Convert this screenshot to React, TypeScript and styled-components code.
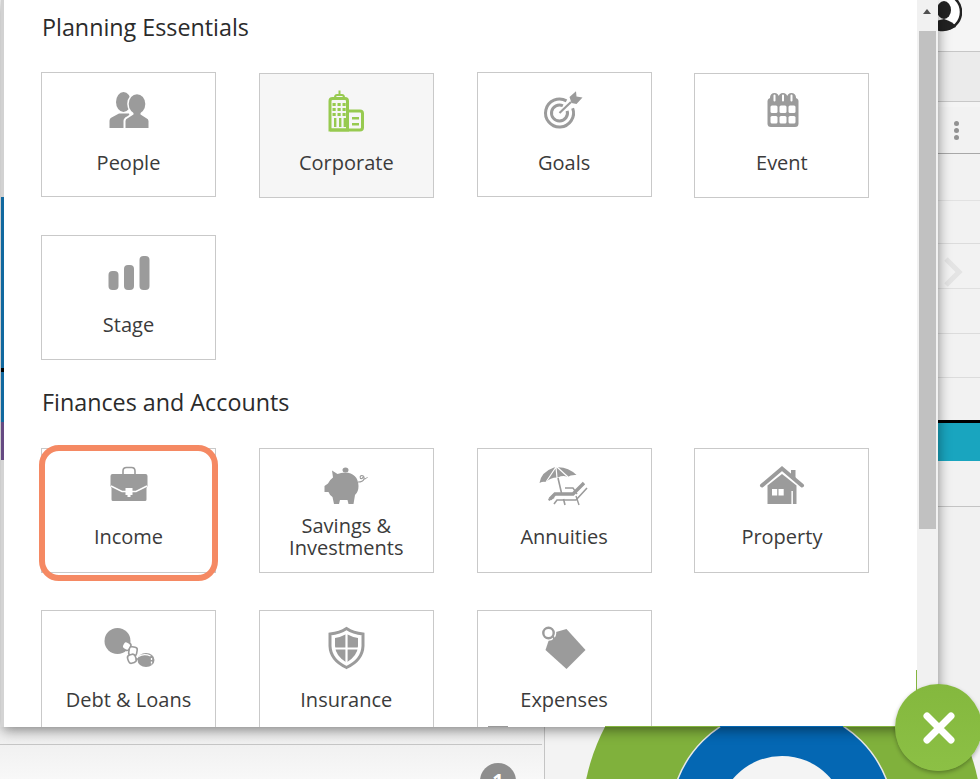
import React from 'react';
import styled, { createGlobalStyle } from 'styled-components';

const Global = createGlobalStyle`
  html, body {
    margin: 0;
    padding: 0;
    background: #f4f4f4;
    font-family: "Open Sans", "Liberation Sans", sans-serif;
  }
`;

const Page = styled.div`
  position: relative;
  width: 980px;
  height: 779px;
  overflow: hidden;
  display: grid;
  grid-template-rows: 727px 52px;
  background: #f3f3f3;
`;

const TopRow = styled.div`
  display: flex;
  min-height: 0;
`;

const LeftStrip = styled.div`
  position: relative;
  z-index: 3;
  width: 3px;
  margin: 0 -1px 0 1px;
  flex: none;
  display: flex;
  flex-direction: column;
`;

const StripPart = styled.div<{ $h?: number; $c: string }>`
  height: ${p => (p.$h ? `${p.$h}px` : 'auto')};
  flex: ${p => (p.$h ? 'none' : '1')};
  background: ${p => p.$c};
`;

const Dialog = styled.div`
  position: relative;
  z-index: 2;
  flex: none;
  display: flex;
  width: 935px;
  height: 727px;
  box-shadow: 0 3px 12px rgba(0, 0, 0, 0.45);
`;

const Modal = styled.div`
  position: relative;
  width: 914px;
  height: 727px;
  overflow: hidden;
  background: #fff;
  padding: 12.4px 0 0 38px;
  box-sizing: border-box;
`;

const Heading = styled.h2<{ $second?: boolean }>`
  margin: ${p => (p.$second ? '27px 0 30.8px 1px' : '0 0 30px 1px')};
  font-size: 23.3px;
  line-height: 30px;
  font-weight: 500;
  color: #2b2b2b;
`;

const Grid = styled.div`
  display: grid;
  grid-template-columns: repeat(4, 175px);
  grid-auto-rows: 125px;
  column-gap: 42.8px;
  row-gap: 37.6px;
`;

const Card = styled.div<{ $active?: boolean; $drop?: boolean }>`
  position: relative;
  box-sizing: border-box;
  display: flex;
  flex-direction: column;
  align-items: center;
  margin-top: ${p => (p.$drop ? '1px' : '0')};
  margin-bottom: ${p => (p.$drop ? '-1px' : '0')};
  padding-top: 15px;
  border: 1px solid #c9c9c9;
  background: ${p => (p.$active ? '#f6f6f6' : '#fff')};
`;

const IconBox = styled.svg`
  display: block;
  flex: none;
  width: 64px;
  height: 44px;
  margin-bottom: 7px;
`;

const Label = styled.div<{ $shift?: number }>`
  display: flex;
  flex: none;
  align-items: center;
  justify-content: center;
  box-sizing: border-box;
  height: 44px;
  width: 100%;
  margin-top: ${p => p.$shift || 0}px;
  padding: 0 12px;
  text-align: center;
  font-size: 20px;
  line-height: 22px;
  color: #3b3b3b;
`;

const Ring = styled.div`
  position: absolute;
  top: -4px;
  left: -3px;
  right: -3px;
  bottom: -9px;
  border: 6px solid #f58963;
  border-radius: 20px;
  pointer-events: none;
`;

const EdgeLine = styled.div`
  position: absolute;
  top: 670px;
  right: 0;
  width: 1px;
  height: 57px;
  background: #84b53f;
`;

// 1px of the chart behind shows under the panel's bottom edge
const BottomHem = styled.div`
  position: absolute;
  bottom: 0;
  left: 602px;
  width: 312px;
  height: 1px;
  background: linear-gradient(
    to right,
    #84b53f 0,
    #84b53f 115px,
    #0467b3 115px,
    #0467b3 238px,
    #84b53f 238px,
    #84b53f 100%
  );
`;

const PeekTab = styled.div`
  position: absolute;
  bottom: 0;
  left: 485px;
  width: 20px;
  height: 1px;
  background: #999;
`;

const ScrollTrack = styled.div`
  position: relative;
  width: 21px;
  height: 727px;
  background: #f1f1f1;
`;

const ScrollArrow = styled.div`
  position: absolute;
  top: 9px;
  left: 6px;
  border-left: 4.5px solid transparent;
  border-right: 4.5px solid transparent;
  border-bottom: 5px solid #505050;
`;

const ScrollThumb = styled.div`
  position: absolute;
  top: 31px;
  left: 2px;
  width: 17px;
  height: 498px;
  background: #c1c1c1;
`;

const RightRail = styled.div`
  flex: 1;
  display: flex;
  flex-direction: column;
  min-width: 0;
`;

const RailRow = styled.div<{ $h: number; $line?: string; $bg?: string }>`
  position: relative;
  box-sizing: border-box;
  height: ${p => p.$h}px;
  flex: none;
  background: ${p => p.$bg || '#f2f2f2'};
  border-bottom: ${p => (p.$line ? `1px solid ${p.$line}` : 'none')};
  display: flex;
  align-items: center;
  overflow: hidden;
`;

const Avatar = styled.svg`
  position: absolute;
  top: 0;
  left: 0;
  width: 24px;
  height: 32px;
`;

const Dots = styled.div`
  display: flex;
  flex-direction: column;
  gap: 2px;
  margin-left: 16px;
  span {
    width: 5px;
    height: 5px;
    border-radius: 50%;
    background: #929292;
  }
`;

const Chevron = styled.svg`
  position: absolute;
  top: 12px;
  left: 5px;
  width: 20px;
  height: 32px;
`;

const BottomRow = styled.div`
  display: flex;
  min-height: 0;
  overflow: hidden;
`;

const BottomLeft = styled.div`
  position: relative;
  width: 545px;
  flex: none;
  box-sizing: border-box;
  padding-top: 17px;
  border-right: 1px solid #c4c4c4;
  background: linear-gradient(#ededed, #f8f8f8);
`;

const BottomRule = styled.div`
  width: 542px;
  height: 1px;
  background: #c6c6c6;
`;

const CountBadge = styled.div`
  position: absolute;
  top: 36px;
  left: 480px;
  width: 36px;
  height: 36px;
  border-radius: 50%;
  background: #8e8e8e;
  color: #fff;
  font-size: 20px;
  font-weight: 700;
  line-height: 36px;
  text-align: center;
`;

const Chart = styled.svg`
  display: block;
  flex: 1;
  height: 52px;
  min-width: 0;
`;

const CloseButton = styled.button`
  position: absolute;
  z-index: 3;
  top: 684px;
  left: 895px;
  width: 87px;
  height: 87px;
  padding: 0;
  border: 0;
  border-radius: 50%;
  background: linear-gradient(#84b83e, #8cc045);
  box-shadow: 0 2px 4px rgba(0, 0, 0, 0.3);
  display: flex;
  align-items: center;
  justify-content: center;
`;

const G = '#9b9b9b';

const PeopleIcon = () => (
  <IconBox viewBox="0 0 64 44">
    <ellipse cx="26.5" cy="14" rx="7.5" ry="10" fill={G} />
    <path d="M12.5 40V33Q12.5 30 15.5 29L22 25.5H32L36 40Z" fill={G} />
    <ellipse cx="40" cy="16" rx="9.8" ry="11.3" fill="#fff" />
    <path d="M26.5 40V33Q26.5 30 30 28.5L35 25H45L50 28.5Q53 30 53 33V40Z" fill="#fff" />
    <ellipse cx="40" cy="16" rx="8.3" ry="9.8" fill={G} />
    <path d="M28.5 40V33Q28.5 31 31 30L36.5 26.5V23H43.5V26.5L49 30Q51.5 31 51.5 33V40Z" fill={G} />
  </IconBox>
);

const CorporateIcon = () => {
  const c = '#97ca50';
  return (
    <IconBox viewBox="0 0 64 44">
      <path d="M25.5 1.5V6M21 8.5Q21 6 23 6H28Q30 6 30 8.5" stroke={c} strokeWidth="2" fill="none" />
      <path d="M16 41V12Q16 9.5 18.5 9.5H31Q33.5 9.5 33.5 12V41Z" stroke={c} strokeWidth="3" fill="none" />
      <path d="M33.5 22H46Q48.5 22 48.5 24.5V38.5Q48.5 41 46 41H16" stroke={c} strokeWidth="3" fill="none" />
      {[14, 19, 24].flatMap(y =>
        [20, 25, 30].map(x => <rect key={`${x}-${y}`} x={x - 1.5} y={y} width="3.2" height="3" fill={c} />)
      )}
      <path d="M20 29h2.4v9H20zM25 29h2.4v9H25zM29.6 29H32v9h-2.4zM38 28h7v2.6h-7zM38 34h7v2.6h-7z" fill={c} />
    </IconBox>
  );
};

const GoalsIcon = () => (
  <IconBox viewBox="0 0 64 44">
    <path d="M40.66 20.2A14 14 0 1 1 34.5 12.9" stroke={G} strokeWidth="3" fill="none" />
    <path d="M35.2 22.9A8 8 0 1 1 30.9 17.75" stroke={G} strokeWidth="3" fill="none" />
    <path d="M27.5 25L39 14" stroke={G} strokeWidth="2.2" />
    <path d="M37.5 9L44 3.2L44.5 8.5L50.5 9.5L44.5 16L39.5 15Z" fill={G} />
  </IconBox>
);

const EventIcon = () => (
  <IconBox viewBox="0 0 64 44">
    <rect x="17.5" y="9" width="31" height="29" rx="3.5" fill={G} />
    <path d="M20 11V8.5a4.5 4.5 0 0 1 9 0V11ZM28.5 11V8.5a4.5 4.5 0 0 1 9 0V11ZM37 11V8.5a4.5 4.5 0 0 1 9 0V11Z" fill={G} />
    <path d="M24.5 6.5v5M33 6.5v5M41.5 6.5v5" stroke="#fff" strokeWidth="2" strokeLinecap="round" />
    {[16.5, 27].flatMap(y =>
      [20.5, 29.5, 38.5].map(x => <rect key={`${x}-${y}`} x={x} y={y} width="7" height="7.5" rx="1.5" fill="#fff" />)
    )}
  </IconBox>
);

const StageIcon = () => (
  <IconBox viewBox="0 0 64 44">
    <rect x="11.5" y="20" width="10" height="19" rx="4" fill={G} />
    <rect x="27" y="14" width="10" height="25" rx="4" fill={G} />
    <rect x="42.5" y="5" width="10" height="34" rx="4" fill={G} />
  </IconBox>
);

const IncomeIcon = () => (
  <IconBox viewBox="0 0 64 44">
    <path d="M26 10V7Q26 3.5 29.5 3.5H34.5Q38 3.5 38 7V10" stroke={G} strokeWidth="1.6" fill="none" />
    <path d="M13.5 12Q13.5 10 15.5 10H48.5Q50.5 10 50.5 12V22L49.5 24V35.5Q49.5 37 48 37H16Q14.5 37 14.5 35.5V24L13.5 22Z" fill={G} />
    <path d="M14 22L25 27.5H39L50 22" stroke="#fff" strokeWidth="1.4" fill="none" />
    <rect x="28.5" y="24" width="7" height="7" fill="#fff" />
    <rect x="30.5" y="31" width="3" height="2" fill="#fff" />
  </IconBox>
);

const SavingsIcon = () => (
  <IconBox viewBox="0 0 64 44">
    <ellipse cx="31.5" cy="6" rx="3" ry="2.5" fill={G} />
    <path d="M18 6.5L23.5 10Q27 8.5 31 8.5Q44 9 44.5 22Q44.5 28 41 31L39.5 40H34.5L33.5 36H26L25 40H20L18.5 33Q15.5 31 14.5 28H10.5V22L14 19.5Q15.5 16 19 13.5Z" fill={G} />
    <path d="M44 18Q49 18 50 15Q50.5 11.5 47.5 11.5Q45.5 12 46.5 14.5Q48.5 15 49 13" stroke={G} strokeWidth="1.1" fill="none" />
    <path d="M50 15Q52.5 15 53.5 13" stroke={G} strokeWidth="1" fill="none" />
  </IconBox>
);

const AnnuitiesIcon = () => (
  <IconBox viewBox="0 0 64 44">
    <path d="M7.5 19Q9 8 22 3.5Q35 1.5 44.5 11Q39 10.5 35.5 13Q31 11 26 13.5Q19 13 14 18Q11 17 7.5 19Z" fill={G} />
    <path d="M24 3L14 18M24 3L25 14M25 3L36 13" stroke="#fff" strokeWidth="1.2" />
    <path d="M26 14L29.5 29M31.5 35L33 41" stroke={G} strokeWidth="1.6" />
    <path d="M18 35L23 30H41L52 19" stroke={G} strokeWidth="3.4" fill="none" />
    <path d="M22 40L25 36H44L55 24" stroke={G} strokeWidth="1.6" fill="none" />
    <path d="M33 24H41L45 30M48 24L44 27M44 32L47 41" stroke={G} strokeWidth="1.4" fill="none" />
    <path d="M16.5 36L22 33" stroke={G} strokeWidth="2.4" />
  </IconBox>
);

const PropertyIcon = () => (
  <IconBox viewBox="0 0 64 44">
    <rect x="41" y="6" width="4.5" height="9" fill={G} />
    <path d="M12 21.5L32 4.5L52 21.5" stroke={G} strokeWidth="4" strokeLinecap="round" fill="none" />
    <path d="M17.5 21.5L32 10L46.5 21.5V40H17.5Z" fill={G} />
    <rect x="22" y="25" width="5.2" height="6.5" fill="#fff" />
    <rect x="28.5" y="25" width="5.2" height="6.5" fill="#fff" />
    <rect x="41.4" y="27" width="1.5" height="13" fill="#fff" />
  </IconBox>
);

const DebtIcon = () => (
  <IconBox viewBox="0 0 64 44">
    <circle cx="20.5" cy="15" r="13" fill={G} />
    <ellipse cx="49" cy="34" rx="8.5" ry="7" fill={G} />
    <path d="M41.5 30.5Q47 27 53.5 30" stroke="#fff" strokeWidth="1.3" fill="none" />
    <path d="M54.5 32V39" stroke="#fff" strokeWidth="1.3" strokeDasharray="2 1.4" />
    <rect x="25.5" y="16" width="8" height="8" rx="3" transform="rotate(30 29.5 20)" fill="#fff" stroke={G} strokeWidth="1.6" />
    <rect x="32" y="21" width="8" height="8.5" rx="2.5" transform="rotate(10 36 25)" fill="#fff" stroke={G} strokeWidth="1.6" />
    <rect x="31" y="28.5" width="8" height="8.5" rx="3" transform="rotate(-20 35 33)" fill="#fff" stroke={G} strokeWidth="1.6" />
    <path d="M38.5 33L42 33" stroke={G} strokeWidth="1.6" />
  </IconBox>
);

const InsuranceIcon = () => (
  <IconBox viewBox="0 0 64 44">
    <path d="M32.5 2.5Q26 7 16 8V20Q16.5 34 32.5 41.5Q48.5 34 49 20V8Q39 7 32.5 2.5Z" stroke={G} strokeWidth="3" fill="#fff" />
    <path d="M32.5 8Q27 11 21 12V20Q21.5 30 32.5 36.5Q43.5 30 44 20V12Q38 11 32.5 8Z" fill={G} />
    <path d="M32.5 7V37M20 22.5H45" stroke="#fff" strokeWidth="2.2" />
  </IconBox>
);

const ExpensesIcon = () => (
  <IconBox viewBox="0 0 64 44">
    <path d="M34.5 3L53.5 24L34.5 43L13.5 24L17.5 12L24 6Z" fill={G} />
    <circle cx="16.5" cy="7" r="7.8" fill="#fff" />
    <circle cx="16.5" cy="7" r="5.2" stroke={G} strokeWidth="2.4" fill="none" />
    <path d="M20 9.5Q22.5 11.5 22 14" stroke={G} strokeWidth="1.8" fill="none" />
  </IconBox>
);

type Item = {
  name: string;
  icon: React.ReactNode;
  active?: boolean;
  drop?: boolean;
  ring?: boolean;
  shift?: number;
};

const planning: Item[] = [
  { name: 'People', icon: <PeopleIcon />, shift: 2 },
  { name: 'Corporate', icon: <CorporateIcon />, active: true, drop: true, shift: 1 },
  { name: 'Goals', icon: <GoalsIcon />, shift: 2 },
  { name: 'Event', icon: <EventIcon />, drop: true, shift: 1 },
  { name: 'Stage', icon: <StageIcon />, shift: 1 },
];

const finances: Item[] = [
  { name: 'Income', icon: <IncomeIcon />, ring: true },
  { name: 'Savings & Investments', icon: <SavingsIcon /> },
  { name: 'Annuities', icon: <AnnuitiesIcon /> },
  { name: 'Property', icon: <PropertyIcon /> },
  { name: 'Debt & Loans', icon: <DebtIcon />, shift: 1 },
  { name: 'Insurance', icon: <InsuranceIcon />, shift: 1 },
  { name: 'Expenses', icon: <ExpensesIcon />, shift: 1 },
];

const Cards = ({ items }: { items: Item[] }) => (
  <Grid>
    {items.map(item => (
      <Card key={item.name} $active={item.active} $drop={item.drop}>
        {item.icon}
        <Label $shift={item.shift}>{item.name}</Label>
        {item.ring && <Ring />}
      </Card>
    ))}
  </Grid>
);

const App = () => (
  <Page>
    <Global />
    <TopRow>
      <LeftStrip>
        <StripPart $h={197} $c="#d2d2d2" />
        <StripPart $h={171} $c="#10689f" />
        <StripPart $h={4} $c="#000" />
        <StripPart $h={50} $c="#10689f" />
        <StripPart $h={38} $c="#654a82" />
        <StripPart $c="#d4d4d4" />
      </LeftStrip>
      <Dialog>
        <Modal>
          <Heading>Planning Essentials</Heading>
          <Cards items={planning} />
          <Heading $second>Finances and Accounts</Heading>
          <Cards items={finances} />
          <EdgeLine />
          <BottomHem />
          <PeekTab />
        </Modal>
        <ScrollTrack>
          <ScrollArrow />
          <ScrollThumb />
        </ScrollTrack>
      </Dialog>
      <RightRail>
        <RailRow $h={52} $line="#c6c6c6" $bg="#f5f5f5">
          <Avatar viewBox="0 0 24 32">
            <circle cx="5" cy="12" r="18" fill="#fff" stroke="#222" strokeWidth="2.5" />
            <ellipse cx="6" cy="10" rx="7" ry="9" fill="#222" />
            <path d="M-8 28Q-6 21 6 19Q16 22 18 27Q10 30 5 30Z" fill="#222" />
          </Avatar>
        </RailRow>
        <RailRow $h={50} $line="#c8c8c8" $bg="#ebebeb" />
        <RailRow $h={5} $bg="#f4f4f4" />
        <RailRow $h={47} $line="#a8a8a8">
          <Dots>
            <span />
            <span />
            <span />
          </Dots>
        </RailRow>
        <RailRow $h={47} $line="#e2e2e2" />
        <RailRow $h={43} $line="#dcdcdc" />
        <RailRow $h={45} $line="#e0e0e0">
          <Chevron viewBox="0 0 20 32">
            <path d="M3 3L16 16L3 29" stroke="#e4e4e4" strokeWidth="5" fill="none" />
          </Chevron>
        </RailRow>
        <RailRow $h={45} $line="#dcdcdc" />
        <RailRow $h={44} $line="#dcdcdc" />
        <RailRow $h={42} />
        <RailRow $h={3} $bg="#000" />
        <RailRow $h={38} $bg="#19a5bf" />
        <RailRow $h={46} $line="#c4c4c4" />
        <RailRow $h={221} $bg="#f1f1f1" />
      </RightRail>
    </TopRow>
    <BottomRow>
      <BottomLeft>
        <BottomRule />
        <CountBadge>1</CountBadge>
      </BottomLeft>
      <Chart viewBox="545 727 435 52">
        <circle cx="782" cy="820" r="200" fill="#80b13c" />
        <circle cx="782" cy="820" r="112" fill="#0467b3" stroke="#e8e8e8" strokeWidth="1.5" />
        <circle cx="782" cy="820" r="64" fill="#f4f4f4" />
      </Chart>
    </BottomRow>
    <CloseButton aria-label="Close">
      <svg width="40" height="40" viewBox="0 0 40 40">
        <path d="M8 8L32 32M32 8L8 32" stroke="#fff" strokeWidth="7" strokeLinecap="round" />
      </svg>
    </CloseButton>
  </Page>
);

export default App;
